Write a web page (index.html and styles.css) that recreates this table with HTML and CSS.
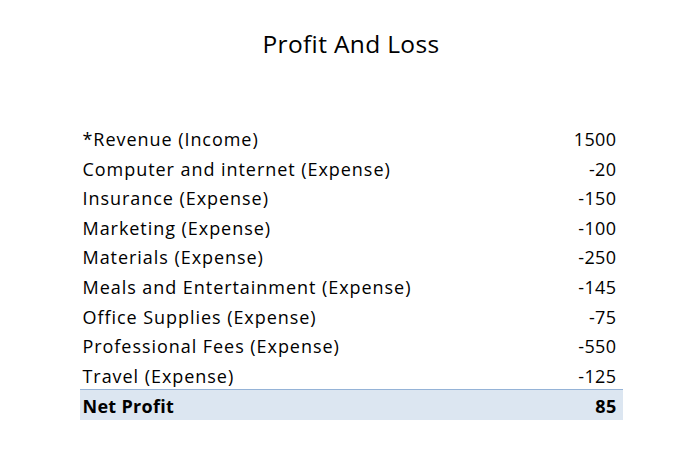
FILE: index.html
```html
<!DOCTYPE html>
<html lang="en">
<head>
    <meta charset="UTF-8">
    <title>Profit And Loss</title>
    <link rel="stylesheet" href="styles.css">
</head>
<body>

    <div class="report">
        <h1>Profit And Loss</h1>

        <table class="pl-table">
            <tr><td>*Revenue (Income)</td><td class="num">1500</td></tr>
            <tr><td>Computer and internet (Expense)</td><td class="num">-20</td></tr>
            <tr><td>Insurance (Expense)</td><td class="num">-150</td></tr>
            <tr><td>Marketing (Expense)</td><td class="num">-100</td></tr>
            <tr><td>Materials (Expense)</td><td class="num">-250</td></tr>
            <tr><td>Meals and Entertainment (Expense)</td><td class="num">-145</td></tr>
            <tr><td>Office Supplies (Expense)</td><td class="num">-75</td></tr>
            <tr><td>Professional Fees (Expense)</td><td class="num">-550</td></tr>
            <tr><td>Travel (Expense)</td><td class="num">-125</td></tr>
            <tr class="total"><td>Net Profit</td><td class="num">85</td></tr>
        </table>
    </div>

</body>
</html>
```

FILE: styles.css
```css
body {
    margin: 0;
    background: #fff;
    color: #000;
    font-family: 'Open Sans', sans-serif;
}

.report {
    width: 543px;
    margin: 0 auto;
    padding-top: 26px;
    position: relative;
    left: 1px;
}

.report h1 {
    margin: 0 0 61px;
    font-size: 24.5px;
    font-weight: 400;
    text-align: center;
    line-height: 36px;
    letter-spacing: 0.35px;
}

.pl-table {
    width: 100%;
    border-collapse: collapse;
    font-size: 18px;
}

.pl-table td {
    height: 29.6px;
    padding: 4px 6px 0 3px;
    line-height: 25.6px;
    letter-spacing: 0.95px;
    box-sizing: border-box;
}

.pl-table .num {
    text-align: right;
    letter-spacing: 0.4px;
}

/* ligne du total */
.pl-table .total td {
    background: #dce6f1;
    border-top: 1px solid #95b3d7;
    font-weight: 700;
    letter-spacing: 0.3px;
}
```
